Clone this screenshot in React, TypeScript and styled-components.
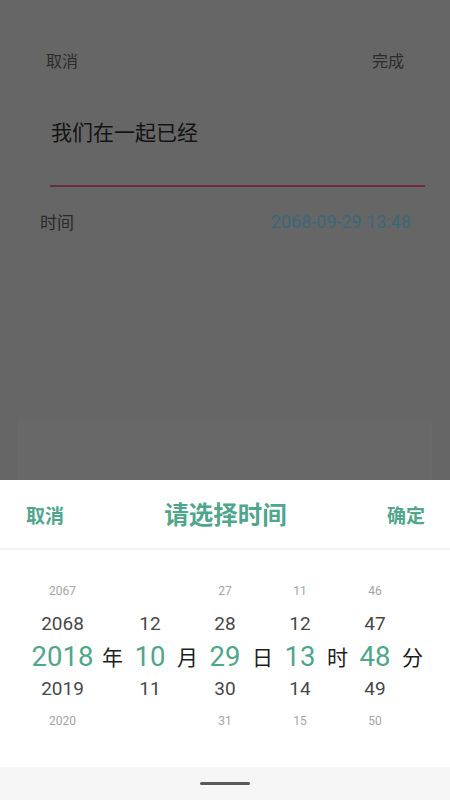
import React from "react";
import styled, { createGlobalStyle } from "styled-components";

const Global = createGlobalStyle`
  html, body { margin: 0; padding: 0; }
  body { font-family: Roboto, "Noto Sans CJK SC", sans-serif; background: #666; }
  #root { width: 450px; height: 800px; }
`;

const Screen = styled.div`
  width: 450px;
  height: 800px;
  display: flex;
  flex-direction: column;
  overflow: hidden;
`;

const Dimmed = styled.div`
  height: 480px;
  flex-shrink: 0;
  background: #666666;
  display: flex;
  flex-direction: column;
  padding: 0 25px 0 40px;
  box-sizing: border-box;
`;

const TopBar = styled.div`
  display: flex;
  justify-content: space-between;
  padding: 48px 21px 0 6px;
  font-family: "Noto Sans CJK SC", sans-serif;
  font-size: 16px;
  line-height: 24px;
  color: #2c2c2c;
`;

const Field = styled.div`
  margin: 44px 0 0 10px;
  padding: 0 0 39px 1px;
  border-bottom: 2px solid #6e2a44;
  font-family: "Noto Sans CJK SC", sans-serif;
  font-size: 21px;
  line-height: 30px;
  color: #141414;
`;

const TimeRow = styled.div`
  display: flex;
  justify-content: space-between;
  align-items: center;
  margin-top: 22px;
  padding-right: 14px;
`;

const TimeLabel = styled.span`
  font-family: "Noto Sans CJK SC", sans-serif;
  font-size: 17px;
  color: #2a2a2a;
`;

const TimeValue = styled.span`
  font-family: Roboto, sans-serif;
  font-size: 18px;
  color: #3a6878;
`;

const Ghost = styled.div`
  margin: auto -7px 0 -22px;
  height: 60px;
  background: #686868;
  border-left: 1px solid #6a6a6a;
  border-right: 1px solid #6a6a6a;
`;

const Sheet = styled.div`
  flex: 1;
  background: #fff;
  display: flex;
  flex-direction: column;
`;

const SheetHeader = styled.div`
  height: 68px;
  display: flex;
  align-items: center;
  justify-content: space-between;
  padding: 0 25px 0 26px;
  border-bottom: 2px solid #f4f4f4;
  font-family: "Noto Sans CJK SC", sans-serif;
  font-weight: 700;
  color: #4fa68c;
`;

const HeaderAction = styled.span`
  font-size: 19px;
`;

const HeaderTitle = styled.span`
  font-size: 24.5px;
  margin-top: -2px;
`;

const Picker = styled.div`
  display: grid;
  grid-template-columns: 75px 25px 50px 25px 50px 25px 50px 25px 50px 25px;
  padding: 25px 25px 0 25px;
  height: 217px;
  box-sizing: border-box;
`;

const Wheel = styled.div`
  display: flex;
  flex-direction: column;
  align-items: center;
`;

const Cell = styled.div<{ $level: 0 | 1 | 2 }>`
  height: 32.5px;
  display: flex;
  align-items: center;
  justify-content: center;
  white-space: nowrap;
  font-family: Roboto, sans-serif;
  font-size: ${(p) => (p.$level === 2 ? "12px" : p.$level === 1 ? "19px" : "27.5px")};
  color: ${(p) => (p.$level === 2 ? "#a4a4a4" : p.$level === 1 ? "#484848" : "#4fa68c")};
`;

const Unit = styled.div`
  display: flex;
  align-items: center;
  justify-content: center;
  padding-top: 65px;
  height: 32.5px;
  font-family: "Noto Sans CJK SC", sans-serif;
  font-size: 21px;
  color: #1e1e1e;
`;

const NavBar = styled.div`
  margin-top: auto;
  height: 33px;
  background: #f6f6f6;
  display: flex;
  align-items: center;
  justify-content: center;
`;

const Handle = styled.div`
  width: 50px;
  height: 3px;
  border-radius: 2px;
  background: #5a5a5a;
`;

type Col = { unit: string; values: (string | null)[] };

const cols: Col[] = [
  { unit: "年", values: ["2067", "2068", "2018", "2019", "2020"] },
  { unit: "月", values: [null, "12", "10", "11", null] },
  { unit: "日", values: ["27", "28", "29", "30", "31"] },
  { unit: "时", values: ["11", "12", "13", "14", "15"] },
  { unit: "分", values: ["46", "47", "48", "49", "50"] },
];

const levels: (0 | 1 | 2)[] = [2, 1, 0, 1, 2];

export default function App() {
  return (
    <Screen>
      <Global />
      <Dimmed>
        <TopBar>
          <span>取消</span>
          <span>完成</span>
        </TopBar>
        <Field>我们在一起已经</Field>
        <TimeRow>
          <TimeLabel>时间</TimeLabel>
          <TimeValue>2068-09-29 13:48</TimeValue>
        </TimeRow>
        <Ghost />
      </Dimmed>
      <Sheet>
        <SheetHeader>
          <HeaderAction>取消</HeaderAction>
          <HeaderTitle>请选择时间</HeaderTitle>
          <HeaderAction>确定</HeaderAction>
        </SheetHeader>
        <Picker>
          {cols.map((c) => (
            <React.Fragment key={c.unit}>
              <Wheel>
                {c.values.map((v, i) => (
                  <Cell key={i} $level={levels[i]}>
                    {v ?? ""}
                  </Cell>
                ))}
              </Wheel>
              <Unit>{c.unit}</Unit>
            </React.Fragment>
          ))}
        </Picker>
        <NavBar>
          <Handle />
        </NavBar>
      </Sheet>
    </Screen>
  );
}
